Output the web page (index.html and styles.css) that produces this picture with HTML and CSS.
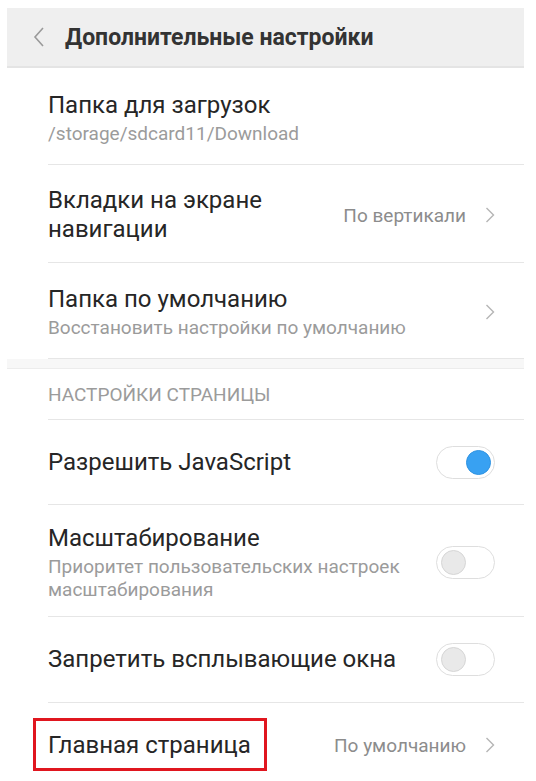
FILE: index.html
```html
<!DOCTYPE html>
<html lang="ru">
<head>
  <meta charset="UTF-8">
  <title>Дополнительные настройки</title>
  <link rel="stylesheet" href="styles.css">
</head>
<body>

  <div class="screen">
    <div class="topbar">
      <svg class="back" width="12" height="20" viewBox="0 0 12 20">
        <path d="M10 1 L2 10 L10 19" fill="none" stroke="#9a9a9a" stroke-width="1.6"/>
      </svg>
      <h1>Дополнительные настройки</h1>
    </div>

    <div class="item h97">
      <div class="text">
        <div class="title">Папка для загрузок</div>
        <div class="sub">/storage/sdcard11/Download</div>
      </div>
    </div>

    <div class="item h98">
      <div class="text">
        <div class="title">Вкладки на экране<br>навигации</div>
      </div>
      <span class="value">По вертикали</span>
      <svg class="arrow" width="10" height="16" viewBox="0 0 10 16">
        <path d="M1.5 1 L8.5 8 L1.5 15" fill="none" stroke="#b5b5b5" stroke-width="1.4"/>
      </svg>
    </div>

    <div class="item h96">
      <div class="text">
        <div class="title">Папка по умолчанию</div>
        <div class="sub">Восстановить настройки по умолчанию</div>
      </div>
      <svg class="arrow" width="10" height="16" viewBox="0 0 10 16">
        <path d="M1.5 1 L8.5 8 L1.5 15" fill="none" stroke="#b5b5b5" stroke-width="1.4"/>
      </svg>
    </div>

    <div class="gap"></div>

    <div class="section">Настройки страницы</div>

    <div class="item h85">
      <div class="text">
        <div class="title">Разрешить JavaScript</div>
      </div>
      <span class="switch on"><span class="knob"></span></span>
    </div>

    <div class="item h112">
      <div class="text">
        <div class="title">Масштабирование</div>
        <div class="sub">Приоритет пользовательских настроек<br>масштабирования</div>
      </div>
      <span class="switch"><span class="knob"></span></span>
    </div>

    <div class="item h86">
      <div class="text">
        <div class="title">Запретить всплывающие окна</div>
      </div>
      <span class="switch"><span class="knob"></span></span>
    </div>

    <div class="item h84 last">
      <div class="text">
        <div class="title"><span class="mark">Главная страница</span></div>
      </div>
      <span class="value">По умолчанию</span>
      <svg class="arrow" width="10" height="16" viewBox="0 0 10 16">
        <path d="M1.5 1 L8.5 8 L1.5 15" fill="none" stroke="#b5b5b5" stroke-width="1.4"/>
      </svg>
    </div>
  </div>

</body>
</html>
```

FILE: styles.css
```css
body {
  margin: 0;
  background-color: #fff;
  font-family: Roboto, "Noto Sans", sans-serif;
  color: #262626;
}
.screen {
  margin: 8px 12px 0 7px;
  overflow: hidden;
  height: 773px;
}
.topbar {
  display: flex;
  align-items: center;
  height: 58px;
  background-color: #efefef;
  border-bottom: 2px solid #e4e4e4;
}
.back {
  margin-left: 26px;
  margin-right: 20px;
}
.topbar h1 {
  margin: 0;
  font-size: 23px;
  font-weight: bold;
  color: #333;
}
.item {
  display: flex;
  align-items: center;
  margin-left: 41px;
  padding-top: 3px;
  padding-right: 29px;
  border-bottom: 1px solid #e6e6e6;
  box-sizing: border-box;
}
.item.last {
  border-bottom: none;
}
.h97 { height: 97px; }
.h98 { height: 98px; }
.h96 { height: 96px; }
.h85 { height: 85px; padding-top: 0; }
.h112 { height: 112px; }
.h86 { height: 86px; padding-top: 0; }
.h84 { height: 84px; padding-top: 0; }
.text {
  flex: 1;
}
.title {
  font-size: 24px;
  line-height: 29px;
  color: #262626;
}
.sub {
  font-size: 19px;
  line-height: 23px;
  color: #9b9b9b;
  margin-top: 2px;
}
.value {
  font-size: 19px;
  color: #8c8c8c;
  margin-right: 19px;
}
.arrow {
  flex: none;
}
.gap {
  height: 9px;
  background-color: #f7f7f7;
  border-bottom: 1px solid #ececec;
}
.section {
  display: flex;
  align-items: center;
  height: 51px;
  margin-left: 41px;
  border-bottom: 1px solid #e6e6e6;
  box-sizing: border-box;
  font-size: 19px;
  color: #9b9b9b;
  text-transform: uppercase;
}
.switch {
  flex: none;
  position: relative;
  width: 57px;
  height: 31px;
  border: 1px solid #dedede;
  border-radius: 17px;
  background-color: #fff;
}
.knob {
  position: absolute;
  top: 3px;
  left: 4px;
  width: 23px;
  height: 23px;
  border-radius: 50%;
  background-color: #e9e9e9;
  border: 1px solid #d6d6d6;
}
.switch.on .knob {
  left: auto;
  right: 3px;
  background-color: #38a1f2;
  border-color: #2f93e2;
}
.mark {
  position: relative;
}
.mark::after {
  content: '';
  position: absolute;
  left: -15px;
  right: -16px;
  top: -13px;
  bottom: -12px;
  border: 3px solid #e0161f;
}
```
